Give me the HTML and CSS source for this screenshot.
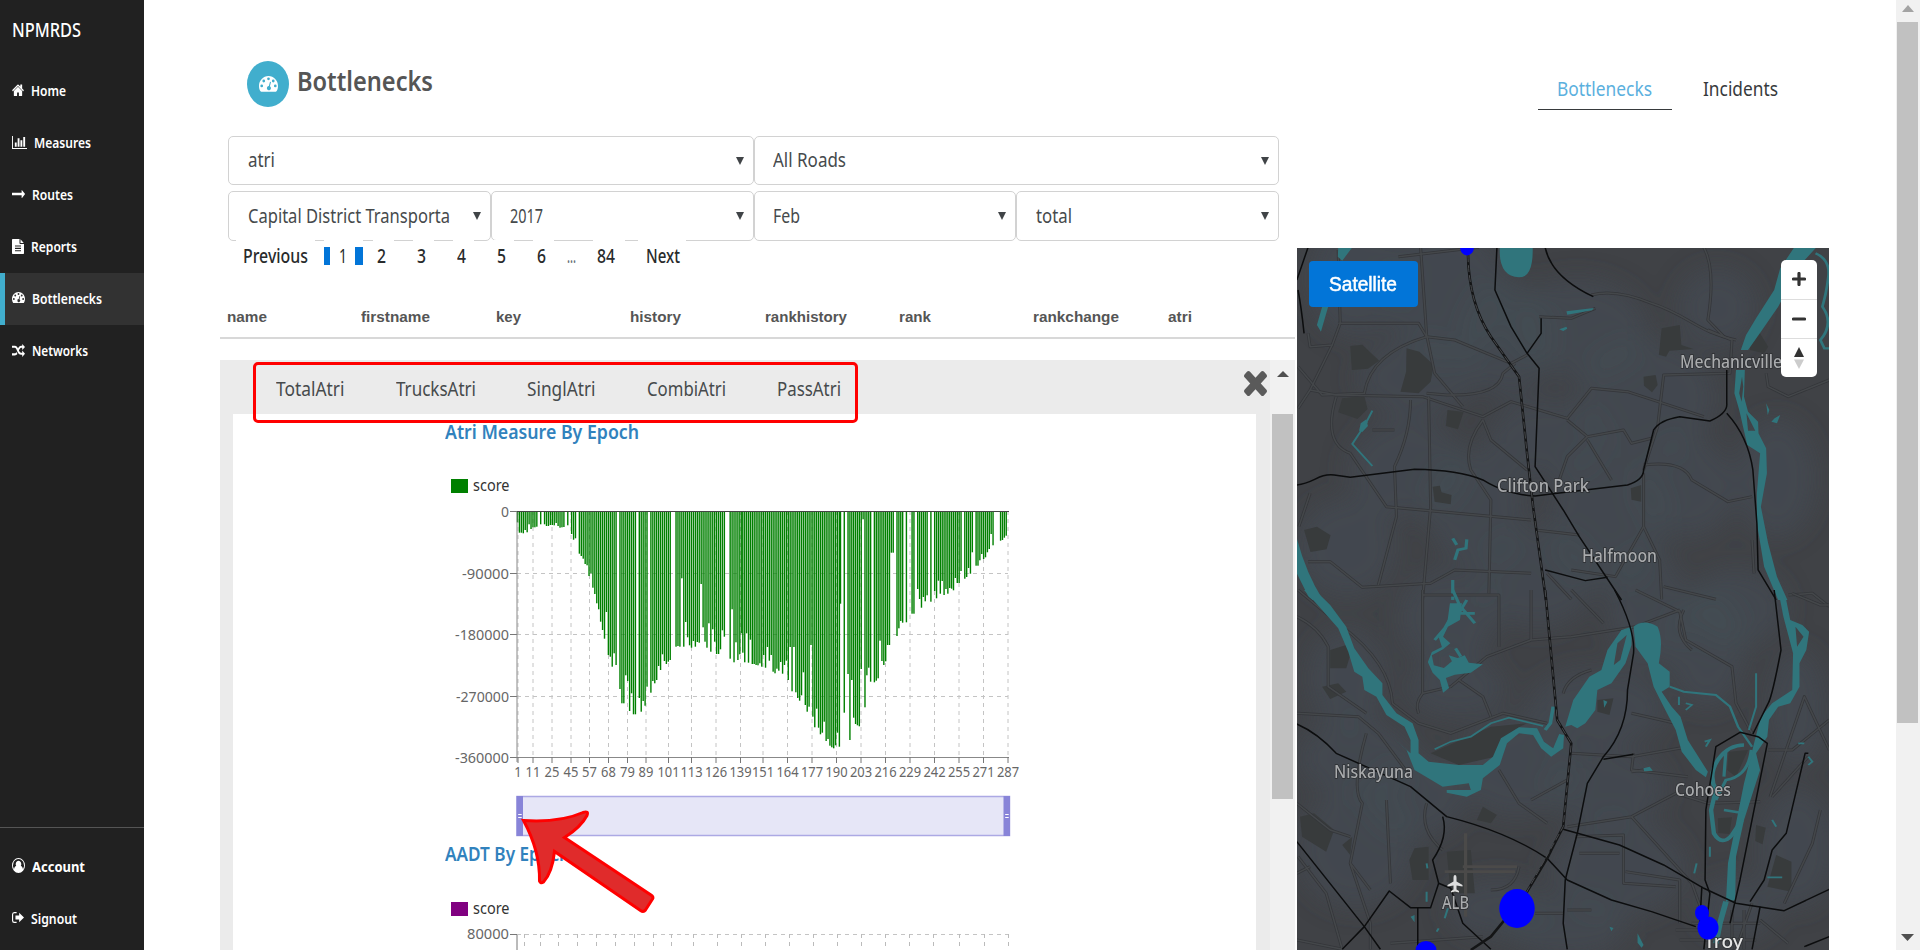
FILE: index.html
```html
<!DOCTYPE html>
<html lang="en">
<head>
<meta charset="utf-8">
<title>NPMRDS - Bottlenecks</title>
<link rel="stylesheet" href="styles.css">
</head>
<body>
<svg class="defs" width="0" height="0">
  <symbol id="gauge" viewBox="0 0 28 24" preserveAspectRatio="none"><path fill-rule="evenodd" d="M14 0C6.300 0 0 6.300 0 14c0 3 .8 5.400 2.200 7.600.3.400.7.600 1.200.6h21.200c.5 0 .9-.2 1.200-.6C27.200 19.400 28 17 28 14 28 6.300 21.700 0 14 0zM4 12a2 2 0 1 1 0 4 2 2 0 0 1 0-4zM7 5a2 2 0 1 1 0 4 2 2 0 0 1 0-4zM14 2a2 2 0 1 1 0 4 2 2 0 0 1 0-4zM21 5a2 2 0 1 1 0 4 2 2 0 0 1 0-4zM24 12a2 2 0 1 1 0 4 2 2 0 0 1 0-4zM16.200 8l1.500.4-1.600 6.200a3 3 0 1 1-1.600-.4z"/></symbol>
</svg>
<div class="page">
  <nav class="sidebar">
    <div class="brand"><span data-w="69">NPMRDS</span></div>
    <a class="nav"><svg width="12" height="12" viewBox="0 200 1664 1340" preserveAspectRatio="none"><path d="M1408 992v480q0 26-19 45t-45 19h-384v-384h-256v384h-384q-26 0-45-19t-19-45v-480q0-1 .5-3t.5-3l575-474 575 474q1 2 1 6zm223-69l-62 74q-8 9-21 11h-3q-13 0-21-7l-692-577-692 577q-12 8-24 7-13-2-21-11l-62-74q-8-10-7-23.500t11-21.500l719-599q32-26 76-26t76 26l244 204v-195q0-14 9-23t23-9h192q14 0 23 9t9 23v408l219 182q10 8 11 21.500t-7 23.500z"/></svg><span data-w="35">Home</span></a>
    <a class="nav"><svg width="15" height="13" viewBox="0 128 2048 1536" preserveAspectRatio="none"><path d="M640 896v512h-256v-512h256zm384-512v1024h-256v-1024h256zm1024 1152v128h-2048v-1536h128v1408h1920zm-640-896v768h-256v-768h256zm384-384v1152h-256v-1152h256z"/></svg><span data-w="57">Measures</span></a>
    <a class="nav"><svg width="13" height="8" viewBox="0 505 1728 776" preserveAspectRatio="none"><path d="M1728 893q0 14-10 24l-384 354q-16 14-35 6-19-9-19-29v-224h-1248q-14 0-23-9t-9-23v-192q0-14 9-23t23-9h1248v-224q0-21 19-29t35 5l384 350q10 10 10 23z"/></svg><span data-w="41">Routes</span></a>
    <a class="nav"><svg width="12" height="15" viewBox="0 0 24 28" preserveAspectRatio="none"><path fill-rule="evenodd" d="M15 0v8a1.500 1.500 0 0 0 1.500 1.500H24v17a1.500 1.500 0 0 1-1.500 1.500h-21A1.500 1.500 0 0 1 0 26.500v-25A1.500 1.500 0 0 1 1.500 0zM17 .5L23.500 7.500H17zM6 12v2h12v-2zM6 16.500v2h12v-2zM6 21v2h12v-2z"/></svg><span data-w="46">Reports</span></a>
    <a class="nav active"><svg width="13" height="12"><use href="#gauge"/></svg><span data-w="70">Bottlenecks</span></a>
    <a class="nav"><svg width="13" height="13" viewBox="0 0 28 24" preserveAspectRatio="none"><path d="M0 3h6c4 0 6 3 8 7s3.500 6 6 6h2v-4l6 6-6 6v-4h-2c-5 0-7-3-9-7S8 7 6 7H0zM0 17h6c1.500 0 2.600-1 3.500-2.400l2.200 3.800C10.300 20 8.500 21 6 21H0zM12.500 9C14 5.500 16 3 20 3h2V0l6 5.500L22 11V7h-2c-2.500 0-3.800 2.500-5.300 5.500z"/></svg><span data-w="56">Networks</span></a>
    <div class="account">
      <a class="nav bold"><svg width="13" height="15" viewBox="0 0 28 28" preserveAspectRatio="none"><path fill-rule="evenodd" d="M14 0a14 14 0 1 1 0 28 14 14 0 0 1 0-28zM14 2a12 12 0 0 0-9.700 19c.7-3.500 2.300-5.700 4.700-6A6.500 6.500 0 0 1 14 5a6.500 6.500 0 0 1 5 10c2.400.3 4 2.500 4.700 6A12 12 0 0 0 14 2z"/></svg><span data-w="53">Account</span></a>
      <a class="nav"><svg width="12" height="11" viewBox="0 0 26 22" preserveAspectRatio="none"><path d="M10 0v2.500H5A2.500 2.500 0 0 0 2.500 5v12A2.500 2.500 0 0 0 5 19.500h5V22H5a5 5 0 0 1-5-5V5a5 5 0 0 1 5-5zM15.500 1.500L26 11 15.500 20.500V15H7.500V7h8z"/></svg><span data-w="46">Signout</span></a>
    </div>
  </nav>

  <main class="main">
    <header class="header">
      <div class="badge"><svg width="19" height="17"><use href="#gauge"/></svg></div>
      <h1 class="title"><span data-w="136">Bottlenecks</span></h1>
      <div class="tabs">
        <a class="tab selected"><span data-w="95">Bottlenecks</span></a>
        <a class="tab"><span data-w="75">Incidents</span></a>
      </div>
    </header>

    <div class="content">
      <section class="list">
        <div class="filters">
          <div class="select wide"><div class="value"><span data-w="27">atri</span></div></div>
          <div class="select wide"><div class="value"><span data-w="73">All Roads</span></div></div>
          <div class="select"><div class="value"><span data-w="202">Capital District Transporta</span></div></div>
          <div class="select"><div class="value"><span data-w="33">2017</span></div></div>
          <div class="select"><div class="value"><span data-w="27">Feb</span></div></div>
          <div class="select"><div class="value"><span data-w="36">total</span></div></div>
        </div>
        <ul class="pager">
          <li class="prev"><span data-w="65">Previous</span></li>
          <li class="current"><b><span data-w="8">1</span></b></li>
          <li><span data-w="9">2</span></li><li><span data-w="9">3</span></li><li><span data-w="9">4</span></li><li><span data-w="9">5</span></li><li><span data-w="9">6</span></li>
          <li class="dots"><span data-w="9">...</span></li>
          <li class="last"><span data-w="18">84</span></li>
          <li class="next"><span data-w="34">Next</span></li>
        </ul>
        <div class="columns">
          <div><span data-w="40">name</span></div><div><span data-w="69">firstname</span></div><div><span data-w="25">key</span></div><div><span data-w="51">history</span></div><div><span data-w="82">rankhistory</span></div><div><span data-w="32">rank</span></div><div><span data-w="86">rankchange</span></div><div><span data-w="24">atri</span></div>
        </div>
        <div class="panel">
          <div class="panel-main">
            <div class="measures">
              <span data-w="68.5">TotalAtri</span><span data-w="80">TrucksAtri</span><span data-w="68.5">SinglAtri</span><span data-w="79">CombiAtri</span><span data-w="64">PassAtri</span>
              <svg class="close" width="23" height="25" viewBox="110 366 1188 1188" preserveAspectRatio="none"><path d="M1298 1322q0 40-28 68l-136 136q-28 28-68 28t-68-28l-294-294-294 294q-28 28-68 28t-68-28l-136-136q-28-28-28-68t28-68l294-294-294-294q-28-28-28-68t28-68l136-136q28-28 68-28t68 28l294 294 294-294q28-28 68-28t68 28l136 136q28 28 28 68t-28 68l-294 294 294 294q28 28 28 68z"/></svg>
              <div class="highlight"></div>
            </div>
            <div class="charts">
              <h2><span data-w="194">Atri Measure By Epoch</span></h2>
              <div class="legend"><i class="green"></i><span data-w="36.5">score</span></div>
              <svg id="epoch" class="chart" width="600" height="343" viewBox="440 500 600 343"></svg>
              <h2 class="second"><span data-w="125">AADT By Epoch</span></h2>
              <div class="legend second"><i class="purple"></i><span data-w="36.5">score</span></div>
              <svg id="aadt" class="chart" width="600" height="27" viewBox="440 923 600 27"></svg>
              <svg class="pointer" width="140" height="110" viewBox="518 806 140 110"><path d="M523.500 820.500C547 822 566 820 583 812.500q6-2 4 3Q581 827 564.500 837.500L651 895q3 2 1.500 4l-7 11q-2 2.500-5 .5L554.500 851.500C553 865 549 876 543.500 882q-3 2-4-1C540 858 533 838 523.500 820.500z"/></svg>
            </div>
          </div>
          <div class="inner-scroll"><svg width="12" height="6"><path d="M0 6L6 0l6 6z"/></svg><div class="thumb"></div></div>
        </div>
      </section>

      <section class="map">
        <svg id="map" width="532" height="702" viewBox="0 0 532 702"></svg>
        <button class="satellite"><span data-w="68">Satellite</span></button>
        <div class="controls">
          <div><svg width="14" height="14"><path d="M7 1.500v11M1.500 7h11" stroke="#333" stroke-width="3.200" stroke-linecap="round"/></svg></div>
          <div><svg width="14" height="14"><path d="M1.500 7h11" stroke="#333" stroke-width="3.200" stroke-linecap="round"/></svg></div>
          <div><svg width="12" height="22"><path d="M1 10L6 0l5 10z" fill="#333"/><path d="M1 12.500l5 9.500 5-9.500z" fill="#ccc"/></svg></div>
        </div>
      </section>
    </div>
  </main>
  <div class="page-scroll"><svg width="12" height="7"><path d="M0 7L6 0l6 7z" fill="#a3a3a3"/></svg><div class="thumb"></div><svg class="down" width="13" height="7"><path d="M0 0h13L6.500 7z" fill="#505050"/></svg></div>
</div>
<script src="app.js"></script>
</body>
</html>
```
FILE: styles.css
```css
* { box-sizing: border-box; }
body { margin: 0; height: 950px; overflow: hidden; background: #fff; font-family: "Noto Sans", "Open Sans", sans-serif; color: #464a4c; font-size: 19px; }
h1, h2, ul { margin: 0; padding: 0; font-weight: 500; }
.defs { display: block; }
.page { display: flex; height: 950px; }
span[data-w] { display: inline-block; white-space: nowrap; transform-origin: 0 50%; }

.sidebar { width: 144px; flex: none; background: #212121; color: #fff; display: flex; flex-direction: column; }
.brand { height: 65px; padding-left: 12px; line-height: 59px; font-size: 20px; font-weight: 500; }
.nav { height: 52px; padding: 0 0 1px 12px; display: flex; align-items: center; gap: 6.500px; font-size: 14.5px; font-weight: 600; }
.brand + .nav { margin-top: -0.500px; }
.nav svg { fill: #fff; flex: none; }
.nav.active { background: #323232; border-left: 5px solid #41aecd; padding-left: 7px; }
.nav.bold { font-weight: 700; }
.account { margin-top: auto; border-top: 1px solid #555; height: 123px; padding-top: 12px; }

.main { width: 1752px; flex: none; padding-left: 76px; }
.header { height: 136px; display: flex; padding-left: 27px; }
.badge { width: 42px; height: 46px; margin-top: 61px; border-radius: 50%; background: #41aecd; display: flex; align-items: center; justify-content: center; flex: none; }
.badge svg { fill: #fff; }
.title { margin: 61px 0 0 7.500px; width: 140.500px; height: 40px; line-height: 40px; font-size: 27px; font-weight: 600; color: #555; }
.tabs { display: flex; margin: 68px 0 0 1101px; height: 42px; }
.tab { width: 134px; padding-left: 19px; line-height: 42px; height: 42px; color: #373a3c; }
.tab.selected { color: #5bb0de; border-bottom: 1.500px solid #373a3c; }
.tab + .tab { margin-left: 12px; }

.content { display: flex; gap: 2px; }
.list { width: 1075px; flex: none; }
.filters { display: flex; flex-wrap: wrap; width: 1051px; margin-left: 8px; row-gap: 6px; }
.select { position: relative; width: 262.750px; height: 50px; border: 1px solid #d2d2d2; border-radius: 5px; padding-left: 18.500px; line-height: 48px; }
.select.wide { width: 525.500px; height: 49px; line-height: 46px; }
.value { width: 206px; overflow: hidden; white-space: nowrap; }
.select::after { content: ""; position: absolute; right: 9px; top: 20px; border: 4.500px solid transparent; border-top: 8px solid #404447; border-bottom: 0; }
.pager { position: relative; display: flex; list-style: none; height: 46px; margin: -1px 0 0 16px; line-height: 33px; color: #292b2c; }
.pager li { width: 21px; margin-right: 19px; background: #fff; height: 32px; padding-left: 4px; }
.pager .prev { width: 79px; padding-left: 7px; margin-right: 9px; }
.pager .current { width: 39px; padding: 7px 0; margin-right: 10px; height: 32px; }
.pager .current b { display: block; height: 18px; line-height: 18px; font-weight: 400; border-left: 6px solid #0275d8; border-right: 8px solid #0275d8; padding-left: 9px; }
.pager .dots { width: 14px; padding: 0; margin: 0 12px 0 -6px; background: none; color: #6c757d; }
.pager .last { width: 32px; margin-right: 13px; }
.pager .next { width: 48px; padding-left: 8px; }
.columns { display: grid; grid-template-columns: repeat(8, 134.400px); height: 53px; padding-left: 7px; border-bottom: 2px solid #d8d8d8; line-height: 61px; font-size: 15px; font-weight: 700; font-family: "Liberation Sans", Arial, sans-serif; color: #555; overflow: hidden; }
.panel { margin-top: 21px; height: 591px; background: #ebebeb; display: flex; }
.panel-main { width: 1050px; }
.measures { position: relative; height: 54px; padding-left: 56px; display: flex; gap: 51.300px; line-height: 57px; font-size: 19.500px; }
.close { position: absolute; right: 3px; top: 11px; fill: #5a5a5a; }
.highlight { position: absolute; z-index: 2; left: 33px; top: 2px; width: 605px; height: 61px; border: 3px solid red; border-radius: 5px; }
.charts { position: relative; width: 1023px; height: 537px; margin-left: 13px; padding-left: 207px; background: #fff; overflow: hidden; }
h2 { margin-left: 4.500px; height: 34px; line-height: 34px; font-size: 20.500px; color: #3182bd; font-weight: 600; }
h2.second { margin-top: -7px; }
.legend { display: flex; align-items: center; gap: 4.500px; height: 24px; margin: 25px 0 0 11px; font-size: 16px; color: #333; line-height: 24px; }
.legend + .chart { margin-top: 3px; }
.legend.second { margin-top: 26px; }
.legend i { width: 17px; height: 14px; margin-top: 2px; }
.green { background: #008000; }
.purple { background: #800080; }
.chart { display: block; }
.chart text { font-size: 15px; fill: #666; }
.pointer { position: absolute; left: 285px; top: 392px; fill: #e02b2b; stroke: red; stroke-width: 3; }
.inner-scroll { width: 25px; background: #f1f1f1; padding: 11px 0 0 2px; }
.inner-scroll svg { display: block; margin-left: 5px; fill: #505050; }
.inner-scroll .thumb { width: 21px; height: 385px; margin-top: 37px; background: #c1c1c1; }

.map { position: relative; width: 532px; height: 702px; margin-top: 112px; background: #404246; overflow: hidden; }
.map > svg { display: block; }
.satellite { position: absolute; left: 12px; top: 13px; width: 109px; height: 46px; padding: 0 0 0 20px; border: 0; border-radius: 4px; background: #0275d8; color: #fff; text-align: left; font: 20px "Liberation Sans", Arial, sans-serif; -webkit-text-stroke: 0.500px #fff; }
.controls { position: absolute; left: 484px; top: 12px; width: 36px; height: 117px; border-radius: 5px; background: #fff; }
.controls div { height: 39px; padding: 0 1px 1px 0; display: flex; align-items: center; justify-content: center; }
.controls div + div { border-top: 1px solid #ddd; }
.place { font-size: 18px; font-weight: 500; fill: #a9abad; stroke: #2c2e31; stroke-width: 1.500; paint-order: stroke; }
.land { fill: #444d55; opacity: .6; }
.park { fill: #383b3c; }
.water { fill: #30757c; stroke: none; }
.stream { fill: none; stroke: #30757c; }
.casing, .lane, .major { fill: none; vector-effect: non-scaling-stroke; stroke-linejoin: round; }
.casing { stroke: #34363a; stroke-width: 3; }
.lane { stroke: #44474a; stroke-width: 1.500; }
.major { stroke: #0c0d0e; stroke-width: 1.500; }
.rail { stroke: #141516; stroke-width: 2.600; }
.railgap { stroke: #484a4d; stroke-width: 1; stroke-dasharray: 7 3; }

.page-scroll { width: 24px; background: #f1f1f1; padding: 5px 0 0 1px; display: flex; flex-direction: column; }
.page-scroll svg { display: block; margin-left: 5px; flex: none; }
.page-scroll .thumb { width: 21px; height: 701px; margin-top: 10px; background: #c1c1c1; }
.page-scroll .down { margin: auto 0 9px 4px; }
```
FILE: app.js
```js
// Condense each label to its column width.
document.querySelectorAll('span[data-w]').forEach(function (el) {
  var natural = el.getBoundingClientRect().width, w = +el.dataset.w;
  el.style.transform = 'scaleX(' + w / natural + ')';
  el.style.marginRight = (w - natural) + 'px';
});

function label(x, y, w, s, anchor) {
  return '<text x="' + x + '" y="' + y + '" textLength="' + w + '" lengthAdjust="spacingAndGlyphs" text-anchor="' + (anchor || 'start') + '">' + s + '</text>';
}
function line(x1, y1, x2, y2, color, dash) {
  return '<path d="M' + x1 + ' ' + y1 + 'L' + x2 + ' ' + y2 + '" stroke="' + color + '" fill="none"' + (dash ? ' stroke-dasharray="4 4"' : '') + '/>';
}

// Atri measure chart. Bar lengths are in thirds of a pixel below the plot's top; 0 leaves an epoch empty.
var series = [
  [0, 5.8, [97,128,128,130,120,127,103,117,112,112,110,0,103,0,103,108,108,105,105,106,99,108,113,112,111,0,106,0,132,149,145,0,191,198,206,222,226,258,250,293,312,340,358,395,420,446,366,495,500,530,490,525,0,597,640,640,556,573,663,610,673,673,0,624,665,633,647,590,0,608,573,580,570,528,540,493,513,522,515,510,0,0,470,468,470,265,470,396,442,466,473,453,470,456,458,282,412,455,473,400,485,418,455,492,492,478,421,440,0,0,506,358,517,457,510,493,430]],
  [676, 5.68, [488,517,430,518,449,522,522,525,526,520,530,495,533,471,512,495,545,550,536,542,516,551,525,512,570,471,604,471,607,624,632,616,547,645,665,650,465,680,712,656,713,733,728,695,753,747,767,772,775,766,728,770]],
  [969, 5.65, [341,0,668,0,552,750,570,683,702,706,709,537,88,652,556,533,575,0,577,572,565,452,513,525,514,465,465,188,188,0,438,415,393,398,0,397,0,0,371,371,0,297,327,353,321,334,316,0,335,0,303,325,272,311,273,315,297,311,294,296,301,264,279,279,243,0,266,261,234,251,187,0,227,227,211,192,207,202,187,177,132,166,0,0,0,152,150,143,137]]
];
var ticks = [[1,518],[11,533],[25,552],[45,571],[57,589.5],[68,608.5],[79,627.5],[89,646],[101,668.5],[113,691.5],[126,716],[139,740.5],[151,763],[164,787.5],[177,812],[190,836.5],[203,861],[216,885.5],[229,910],[242,934.5],[255,959],[271,983.5],[287,1008]];
var s = '';
ticks.forEach(function (t) { s += line(t[1], 511, t[1], 757, '#c4c4c4', true); });
[0, -90000, -180000, -270000, -360000].forEach(function (v, i) {
  var y = Math.round(511 + i * 61.6) + .5, w = [8, 47, 54, 53, 54][i];
  s += line(517, y, 1008, y, '#c4c4c4', true) + line(510, y, 517, y, '#777') + label(509, y + 5, w, v, 'end');
});
series.forEach(function (g) {
  g[2].forEach(function (y, i) {
    if (y) s += '<rect x="' + (516.8 + (g[0] + i * g[1]) / 3).toFixed(2) + '" y="511" width="1.4" height="' + ((y - 63) / 3).toFixed(1) + '" fill="green"/>';
  });
});
s += line(517, 511, 517, 762, '#888') + line(517, 757.5, 1009, 757.5, '#888') + line(517, 511.5, 1009, 511.5, '#444');
ticks.forEach(function (t) {
  s += line(t[1], 757, t[1], 763, '#777') + label(t[1], 777, String(t[0]).length * 7.4, t[0], 'middle');
});
s += '<rect x="517" y="796.5" width="492.5" height="39" fill="#e6e6f7" stroke="#aca9e4" stroke-width="1.5"/>';
[516.5, 1003.5].forEach(function (x) {
  s += '<rect x="' + x + '" y="796" width="6.5" height="40" fill="#8884d8"/><path d="M' + (x + 1.7) + ' 814.500h3.500M' + (x + 1.7) + ' 817.500h3.500" stroke="#fff"/>';
});
document.getElementById('epoch').innerHTML = s;

s = line(517, 934, 517, 950, '#777') + line(510, 934.5, 517, 934.5, '#777') + line(517, 934.5, 1009, 934.5, '#c4c4c4', true) + label(509, 939, 42, '80000', 'end');
[524.5,540.5,558.5,577.5,596.5,615.5,634.5,653.5,671.5,693.5,717.5,741.5,765.5,789.5,813.5,837.5,861.5,885.5,909.5,933.5,959.5,984.5,1008.5].forEach(function (x) { s += line(x, 934, x, 950, '#bbb', true); });
document.getElementById('aadt').innerHTML = s;

// Map: the north and south tiles share one drawing scale, the south one starts 1050 units lower.
var north = 'translate(-7 -8) scale(.4018 .3333)', south = 'translate(-7 342) scale(.4018 .3333)';
function paths(cls, list) { return list.map(function (d) { return '<path class="' + cls + '" d="' + d + '"/>'; }).join(''); }
function roads(list) { return paths('casing', list) + paths('lane', list); }
function stream(w, d) { return '<path class="stream" stroke-width="' + w + '" d="' + d + '"/>'; }

var m = '<defs><filter id="soft" x="-20%" y="-20%" width="140%" height="140%"><feGaussianBlur stdDeviation="12"/></filter></defs><g filter="url(#soft)">';
[[60,30,50,60],[150,45,60,70],[120,130,60,40],[210,90,45,60],[280,80,70,50],[350,150,70,60],[420,60,40,40],[250,190,60,40],[110,220,60,50],[50,300,50,50],[180,260,50,60],[310,270,60,70],[390,240,50,50],[480,230,40,60],[150,370,50,50],[240,330,60,50],[350,360,40,60],[440,360,50,40],[50,430,40,50],[160,440,50,30],[300,460,70,40],[410,400,40,60],[500,460,30,60],[60,510,60,40],[60,600,60,60],[220,520,60,50],[310,540,60,40],[320,620,70,50],[200,660,50,30],[500,600,40,60],[440,660,40,30],[120,550,50,40],[270,680,60,30]].forEach(function (e) {
  m += '<ellipse class="land" cx="' + e[0] + '" cy="' + e[1] + '" rx="' + e[2] + '" ry="' + e[3] + '"/>';
});
m += '</g><g transform="' + north + '">';
m += paths('park', ['M150 318l30-4 42 48-28 24-40 4z','M290 325l32 10 36 40-8 50-30 35-45-5 14-60z','M130 475l55-8 8 40-25 30-48-20z','M392 510l40 6-14 52-30-10z','M355 740l18-3 4 20 25 8-2 28-40-8z','M35 870l32-10 34 26-10 42-40 8z','M848 745l26-10v50l-24-6z','M880 410l30-5 5 30-14 22-20-20z','M925 265l45-10 4 60 30 12-60 5 -8 18-18-6z','M1145 290l20-20 25 50-10 20-35-10z']);
m += roads(['M325 22L340 285 360 400 430 500','M270 50L470 22','M120 250H320L340 290 410 300 550 370 590 345','M340 290Q200 340 185 460L80 465 20 380','M45 280L50 320 105 315 125 250 120 30','M105 315L50 450 20 505','M50 450L115 465 330 470 480 530 550 485 690 535 750 445 840 455 1030 530','M345 470L350 800 330 1078','M115 470Q80 610 150 640L240 800 600 840','M300 480Q300 580 260 680L265 830 220 1035','M620 230L700 235 760 205','M750 165Q810 145 900 190C990 225 1020 280 1110 300','M1030 22Q1060 90 1040 240L1080 290','M1040 270L1100 300 1095 400 930 405 915 560 880 690','M690 540L740 590 830 570 850 610 900 595','M740 590L690 650 670 720','M740 600L800 720','M480 540L500 600 590 690','M480 540Q430 620 450 690L500 780 495 1060','M560 370L530 400Q520 470 390 465L340 460','M880 675Q980 660 1000 720L1090 785 1150 770','M880 700V860L920 960 925 1078','M880 860L810 1010 700 990','M610 870L720 885','M45 965L100 965 180 1042 350 1030 410 990 600 1000','M1185 400L1190 440 1240 470 1342 420','M22 860L50 760','M640 1000L700 1078','M930 1040L1060 1078','M1150 900L1155 1000','M205 570L260 570','M1240 1065L1300 1060 1342 1100']);
m += '<path class="water" d="M1255 22H1310L1270 75 1215 200 1175 270 1140 330 1122 330 1135 285 1160 235 1205 150 1220 85z"/><path class="water" fill-rule="evenodd" d="M1110 390L1132 390 1130 470 1140 515 1165 545 1166 580 1185 625 1187 700 1172 800 1190 910 1212 1010 1238 1080 1215 1080 1180 980 1162 850 1162 760 1170 640 1138 615 1118 510 1106 460zM1125 410L1118 460 1124 485 1128 440zM1136 520L1158 572 1140 572z"/><path class="water" d="M522 22L604 22Q606 112 570 112 524 110 522 40zM120 22L155 22 130 62 119 50zM80 200L95 200 77 275 67 255zM17 895Q40 1000 82 1080L50 1080 17 1000zM688 214L756 204 752 211 690 224zM670 268L688 260 690 266 680 273zM1185 490l8 20-4 15zM1198 545l8-10 14-10-8 25z"/>';
m += stream(7, 'M1308 40Q1345 60 1340 110T1325 200Q1355 250 1320 300L1330 325H1342') + stream(5, 'M205 512L180 570M192 545L155 612 205 678') + '<path class="water" d="M176 550l14-12 4 20-14 18-8-4z"/>' + stream(8, 'M410 960L418 930 438 925 440 898M415 915L405 895') + stream(8, 'M405 1020V1080');
m += paths('major', ['M17 735C60 730 70 700 110 705L150 712 310 688Q420 690 480 720 540 765 610 768L840 735Q880 720 880 690L905 570Q920 540 970 530L1045 543Q1090 520 1087 490V390','M1087 520Q1140 590 1152 690L1162 850 1165 990 1210 1080','M635 22Q650 110 755 170','M515 22L510 150 550 260 590 340 620 385 610 680 680 810 720 890 825 1080','M590 340L625 280V235','M20 150Q28 200 35 280M45 22L17 120','M635 990L735 1022 790 1012']);
m += paths('major rail', ['M443 45Q445 190 500 290L570 410 590 640 605 800 637 1080']) + paths('major railgap', ['M443 45Q445 190 500 290L570 410 590 640 605 800 637 1080']);
m += '</g><g transform="' + south + '">';
m += paths('park', ['M100 180l40-15 10 30-10 40-40 0z','M80 290l40-10 20 25-40 22z','M25 680l35-10 50 50-20 65-60-45z','M310 775l35-5v100l-40 0-8-60z','M390 785l60-5 10 130-60 0z','M350 490L500 410 590 400Q530 430 510 500L420 525z','M1092 485L1140 480 1110 560 1088 540z','M1065 685l35-3-6 50-28-3z','M1210 795l38 20v90l-60-15z','M1160 705l24 8-8 50-18-10z','M765 330l40-5-10 50-30-10z','M480 650l35 25-15 25-35-10z','M130 765l25-25-5 55z']);
m += '<path d="M437 730V980M385 845H560M430 830H565" fill="none" stroke="#4b4a49" stroke-width="8"/>';
m += roads(['M17 80Q70 110 95 170V290L190 370','M17 370L170 380 220 430 300 560','M20 0L130 110Q250 220 255 340L320 400 400 430 530 370 640 400','M330 0V310Q310 340 320 370','M330 15H520V170','M330 310L400 290 490 200 600 150 700 140 860 110 970 60','M420 270L480 320 500 380','M600 0V150','M860 0L970 65 985 150 1100 230 1110 340 1150 430','M980 60Q950 130 1000 180','M700 0L780 100','M750 240Q690 260 680 310','M850 370L960 400','M700 490L850 500 990 470M855 490L850 540 990 560','M190 430Q150 600 180 640L150 820 200 1000 200 1078','M17 640L100 720 150 740M150 820L200 900','M20 800L90 910 130 1078','M240 630L250 880','M340 640Q320 720 380 780','M17 850L50 830','M520 540L570 640 640 700','M600 630L690 570','M690 710L850 680 960 610 1040 640 1170 635','M850 680L1000 880 1030 980M710 740L830 735V880L960 890','M720 790H820','M835 845L970 870V1000','M610 970H680M690 960L750 960','M880 540L850 545','M1190 480H1250L1342 390','M1200 620L1290 500','M1195 620L1280 320 1342 480','M1320 660L1300 760 1230 940','M1150 940L1110 1078M1170 990L1240 1060','M1000 1000H1170M960 1020H1050M970 1050H1160','M570 830Q560 900 500 900','M250 1060L480 1040','M17 1050L130 1078','M1100 960V1078M1130 960V1078','M1250 10L1320 45H1342']);
m += '<path class="water" d="M35 0L62 0 100 45 140 110 160 175 195 235 230 280 230 315 265 370 305 400 320 450 320 490 345 515 420 525 480 525 505 500 525 445 570 412 615 415 632 455 655 475 670 432 682 435 680 475 650 500 625 475 605 435 570 430 540 460 522 525 480 565 475 600 440 620 390 608 390 600 450 600 445 580 380 590 310 540 290 480 258 446 300 490 300 450 285 410 240 375 215 320 185 300 180 260 160 245 145 185 120 115 80 60z"/>';
m += '<path class="water" fill-rule="evenodd" d="M685 410L705 330 745 260 775 240 790 180 825 120 850 110 850 165 835 220 800 280 765 300 760 360 735 400 715 415 700 405zM838 135L815 160 806 225 822 210z"/><path class="water" d="M855 110Q880 85 915 110 930 150 918 220L945 245 945 290 925 305 950 350 972 380 990 450 1040 545 1035 562 1010 540 975 485 960 420 930 350 905 290 890 220 860 170z"/><path class="water" fill-rule="evenodd" d="M1215 0L1235 30 1245 90 1275 105 1292 125 1285 180 1268 220 1268 290 1245 340 1215 350 1192 390 1188 440 1160 490 1170 540 1130 690 1110 800 1108 930 1085 935 1090 820 1110 700 1130 580 1155 460 1172 380 1200 340 1250 300 1252 190 1228 80zM1258 110L1262 170 1278 140z"/>';
m += stream(8, 'M405 0L420 40 385 115 360 150M440 30L420 70 460 70M425 50L460 100M412 175L425 200') + '<path class="water" d="M398 40l30 0-5 50-30 20-12 30 18 20-18 18-28 18 5 30 25 8 20-20-8-18 22 8 18-8 10 22 35 5-30 25-40 6-22 10 8 30-15 14-8-38-18-22-12-32 10-30 25-15-8-30 20-30z"/>' + stream(6, 'M945 290L980 305 1060 315 1095 350 1115 410 1150 470') + stream(5, 'M1160 250V350L1142 420') + stream(9, 'M655 350L648 400 635 420') + stream(5, 'M360 478L400 455 450 440 500 400 545 383 630 408') + stream(11, 'M1130 465Q1090 465 1065 510T1060 600L1048 660 1055 730Q1075 770 1100 735L1125 690') + stream(8, 'M1148 480Q1140 560 1085 570L1060 630M1085 480L1080 560M1080 660L1130 670') + stream(14, 'M1085 935L1070 1000 1060 1060') + stream(5, 'M1045 770V800M1012 820L1006 850M968 320L968 345M985 340L1000 345 985 360M1032 455L1045 450 1035 470M340 820L342 835M340 905V935M393 955L385 985M370 1015L365 1025M1188 862H1225M1290 500L1300 515 1290 525M1265 460H1280M1200 690L1210 710') + '<path class="water" d="M880 535l15-5 8 12-22 2zM865 1030l15 35-5 8-10-15zM300 980l10-5v22zM795 1010l10 4-5 10zM780 330l10 5-8 18z"/>';
m += paths('major', ['M17 402Q70 430 115 490L300 590 390 680Q540 725 640 805L690 870 800 930 900 965 1010 1010','M380 680Q395 740 355 810L370 880 400 895 430 1000 500 1078','M17 755L185 1010 225 1078M130 1078L185 1010 247 903 300 953H350L370 880','M318 953V1078','M808 0Q860 120 855 190L840 300Q840 420 780 500L740 580 715 730 685 870 680 1000 690 1078','M780 508L855 493','M680 718L820 765 930 825 1030 895 1110 940 1230 962 1342 898','M1205 0L1222 180Q1200 320 1190 340L1152 432M1165 440L1188 460 1120 870 1095 1000','M1165 440L1120 427 1060 470 1035 660 1033 870 1045 910 1030 1078','M1025 890L1020 1000','M1290 490L1282 490 1235 730 1200 780 1180 870 1145 935','M1170 950L1150 1078','M1280 1070L1342 1040']);
m += paths('major rail', ['M635 0L665 390 700 460 680 710 640 805 585 915 500 1040 450 1080']) + paths('major railgap', ['M635 0L665 390 700 460 680 710 585 915']);
m += '</g><g class="place">' + label(383, 120, 102, 'Mechanicville') + label(200, 244, 92, 'Clifton Park') + label(285, 314, 75, 'Halfmoon') + label(37, 530, 79, 'Niskayuna') + label(378, 548, 56, 'Cohoes') + label(145, 661, 27, 'ALB') + '</g>';
m += '<g class="place" style="fill:#e4e4e4">' + label(407, 700, 39, 'Troy') + '</g>';
m += '<path d="M158 627q1.500 0 1.500 3v3.500l6 3.500v1.500l-6-1v4l2.500 1.500v1.500l-4-1-4 1v-1.500l2.500-1.500v-4l-6 1V637l6-3.500V630q0-3 1.500-3z" fill="#ddd"/>';
m += '<g fill="#00f"><ellipse cx="170" cy="-1" rx="7" ry="8.500"/><ellipse cx="220" cy="660.500" rx="17.700" ry="19.500"/><ellipse cx="405" cy="665" rx="7" ry="8"/><ellipse cx="411" cy="680" rx="10.500" ry="11.500"/><ellipse cx="129" cy="702" rx="10.500" ry="9"/></g>';
document.getElementById('map').innerHTML = m;
```
